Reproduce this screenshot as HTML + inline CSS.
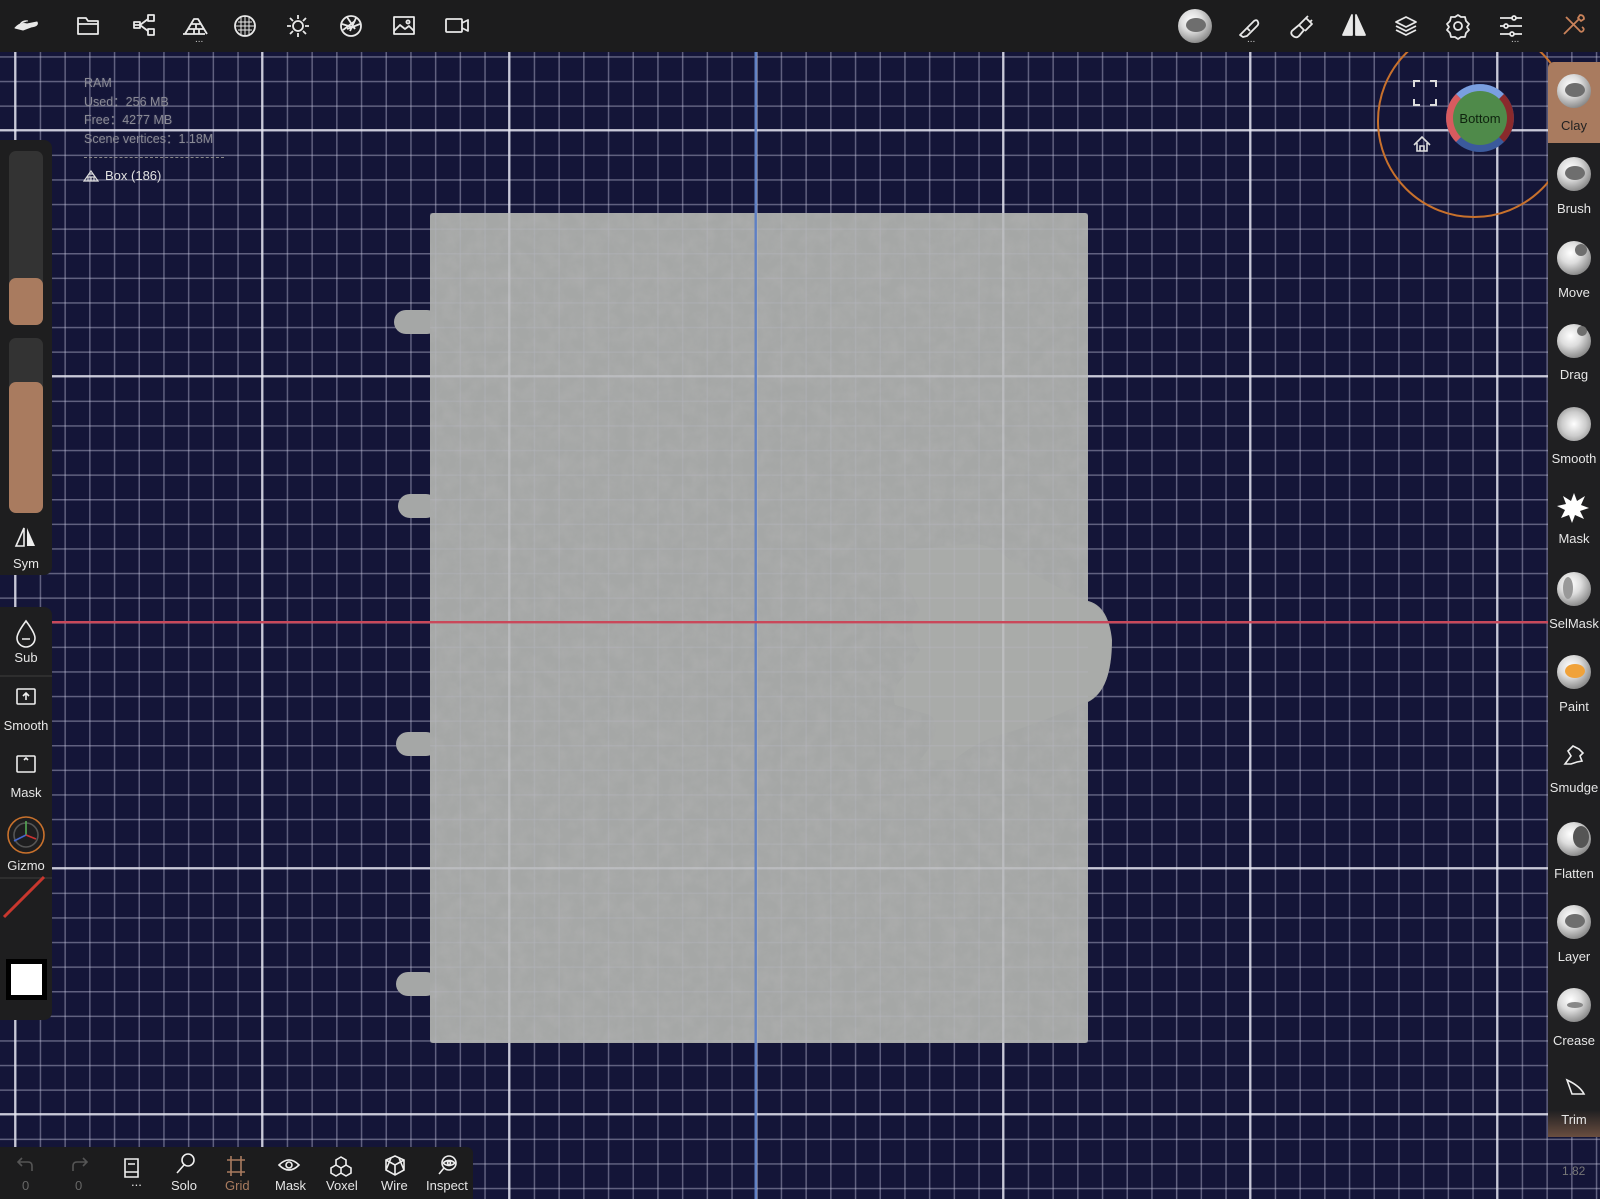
<!DOCTYPE html>
<html><head><meta charset="utf-8">
<style>
html,body{margin:0;padding:0;width:1600px;height:1199px;overflow:hidden;background:#141538;font-family:"Liberation Sans","DejaVu Sans",sans-serif;}
.abs{position:absolute}
.top{left:0;top:0;width:1600px;height:52px;background:#1c1c1d}
.lbl{position:absolute;color:#e6e6e6;font-size:13px;text-align:center;width:60px}
.rp{left:1548px;top:62px;width:52px;height:1075px;background:#1f1f21;border-radius:6px 0 0 6px}
.ball{position:absolute;width:34px;height:34px;border-radius:50%;background:radial-gradient(circle at 40% 35%,#fff 0,#ddd 35%,#8a8a8a 75%,#555 100%)}
.ball i{position:absolute;left:8px;top:9px;width:20px;height:14px;border-radius:50%;background:#6e6e6e}
</style></head><body>
<svg class="abs" style="left:0;top:0" width="1600" height="1199">
<defs>
<pattern id="mn" patternUnits="userSpaceOnUse" x="15" y="130" width="24.7" height="24.6">
<rect x="0" y="0" width="1.5" height="24.6" fill="rgba(200,200,225,0.42)"/>
<rect x="0" y="0" width="24.7" height="1.5" fill="rgba(200,200,225,0.42)"/>
</pattern>
<pattern id="mj" patternUnits="userSpaceOnUse" x="14" y="129" width="247" height="246">
<rect x="0" y="0" width="2.4" height="246" fill="rgba(235,235,245,0.75)"/>
<rect x="0" y="0" width="247" height="2.4" fill="rgba(235,235,245,0.75)"/>
</pattern>
<filter id="tx" x="0" y="0" width="100%" height="100%">
<feTurbulence type="fractalNoise" baseFrequency="0.07" numOctaves="4" seed="4"/>
<feColorMatrix type="matrix" values="0 0 0 0 0.45  0 0 0 0 0.45  0 0 0 0 0.45  0 0 0 -1.6 1.1"/>
</filter>
<clipPath id="mc"><rect x="430" y="213" width="658" height="830"/></clipPath>
</defs>
<rect x="0" y="52" width="1600" height="1147" fill="url(#mn)"/>
<rect x="0" y="52" width="1600" height="1147" fill="url(#mj)"/>
<!-- model -->
<g fill="#a5a7a6">
<rect x="430" y="213" width="658" height="830" rx="3"/>
<rect x="394" y="310" width="45" height="24" rx="12"/>
<rect x="398" y="494" width="40" height="24" rx="12"/>
<rect x="396" y="732" width="42" height="24" rx="12"/>
<rect x="396" y="972" width="42" height="24" rx="12"/>
<path d="M1080 600 Q1108 600 1112 640 Q1112 690 1088 702 L1080 702Z"/>
</g>
<rect x="430" y="213" width="658" height="830" filter="url(#tx)" opacity="0.45"/>
<path d="M905 550 L960 545 Q990 540 1010 560 Q1060 590 1095 605 Q1115 620 1110 660 Q1108 690 1090 700 Q1050 720 1000 735 Q970 745 955 760 L920 760 Q945 730 930 715 L895 705 Q890 690 905 675 L920 650 Q905 630 920 610 L905 580 Z" fill="#a9aba9"/>
<g opacity="0.35">
<rect x="0" y="52" width="1600" height="1147" fill="url(#mn)" clip-path="url(#mc)"/>
<rect x="0" y="52" width="1600" height="1147" fill="url(#mj)" clip-path="url(#mc)"/>
</g>
<rect x="754.5" y="52" width="2.4" height="1147" fill="#5e7fc4"/>
<rect x="0" y="621" width="1600" height="2.4" fill="#c9485a"/>
<!-- gizmo circle -->
<circle cx="1474" cy="121" r="96" fill="none" stroke="#c8712c" stroke-width="2"/>
<path d="M1414 87v-6h6 M1430 81h6v6 M1436 99v6h-6 M1420 105h-6v-6" stroke="#ddd" stroke-width="2" fill="none"/>
<path d="M1414 145l8-8 8 8 M1417 143v8h10v-8 M1420 151v-5h4v5" stroke="#ddd" stroke-width="1.6" fill="none"/>
<circle cx="1480" cy="118" r="34" fill="#3b5a9c"/>
<path d="M1456 94 A34 34 0 0 1 1504 94 L1494 104 L1466 104Z" fill="#7a9fe0"/>
<path d="M1456 94 L1466 104 L1466 132 L1456 142 A34 34 0 0 1 1456 94Z" fill="#d85b5f"/>
<path d="M1504 94 L1494 104 L1494 132 L1504 142 A34 34 0 0 0 1504 94Z" fill="#8a2a2c"/>
<rect x="1464" y="100" width="32" height="36" fill="#4f8a4a" rx="6"/>
<circle cx="1480" cy="118" r="27" fill="#4f8a4a"/>
<text x="1480" y="123" font-size="13" fill="#0e230e" text-anchor="middle" font-family="Liberation Sans,sans-serif">Bottom</text>
</svg>

<div class="abs" style="left:84px;top:74px;color:#8a8a95;font-size:12.5px;line-height:18.7px;text-shadow:0 0 2px #ccc3">RAM<br>Used：256 MB<br>Free：4277 MB<br>Scene vertices：1.18M</div>
<div class="abs" style="left:84px;top:157px;width:140px;border-top:1px dashed #888"></div>
<svg class="abs" style="left:83px;top:170px" width="16" height="12"><path d="M1 11h14L8 1Z M4 7h8 M6 4h4 M8 7v4 M5 7v4 M11 7v4" stroke="#ddd" fill="none" stroke-width="1.2"/></svg>
<div class="abs" style="left:105px;top:168px;color:#e0e0e0;font-size:13px">Box (186)</div>

<div class="abs top"></div>
<svg class="abs" style="left:0;top:0" width="1600" height="52" fill="none" stroke="#e8e8e8" stroke-width="1.8" stroke-linejoin="round">
<path d="M15 28 q5-6 12-4 l10-2 q2 4-6 5 l-8 3z M20 24 q3-4 8-3" fill="#e8e8e8" stroke-width="1"/>
<path d="M78 18h8l2 3h10v13H78z M78 24h20"/>
<path d="M134 25h6 M140 25l8-6 M140 25l8 6"/><rect x="134" y="22" width="6" height="6"/><rect x="148" y="15" width="6" height="6"/><rect x="148" y="29" width="6" height="6"/>
<path d="M183 34h22 M185 34l3-5h16l3 5 M188 29l3-5h10l3 5 M191 24l3-5h4l3 5 M194 29v5 M199 29v5 M196 24v5"/>
<circle cx="245" cy="26" r="10"/><path d="M238 22h14 M236 26h18 M238 30h14 M241 17v18 M245 16v20 M249 17v18" stroke-width="1"/>
<circle cx="298" cy="26" r="5"/><path d="M298 15v4 M298 33v4 M287 26h4 M305 26h4 M290 18l3 3 M303 31l3 3 M306 18l-3 3 M293 31l-3 3"/>
<circle cx="351" cy="26" r="10"/><path d="M347 17l8 12 M356 18l-6 13 M342 24l13 4 M343 30l12-9 M360 24l-13 5"/>
<rect x="394" y="17" width="20" height="17"/><path d="M394 31l6-6 5 4 4-3 5 5"/><circle cx="408" cy="22" r="1.6"/>
<rect x="446" y="19" width="16" height="13" rx="1"/><path d="M462 23l6-3v11l-6-3"/>
<path d="M1240 35l4-4 10-10 q3-2 4 1 q1 2-1 4 l-10 10 -4 1z M1247 28l3 3"/>
<path d="M1292 35q-2-3 1-5l6-5 5 5-5 6q-3 3-7-1z M1299 25l7-7 6 6-7 7 M1306 18l2-2 M1310 22l2-2"/>
<path d="M1352 15v20h-9z M1356 15v20h9z" fill="#e8e8e8"/>
<path d="M1406 17l10 5-10 5-10-5z M1396 26l10 5 10-5 M1396 30l10 5 10-5"/>
<circle cx="1458" cy="26" r="4"/><path d="M1458 15l3 2 4 0 1 4 3 3-2 3 2 3-3 3-1 4-4 0-3 2-3-2-4 0-1-4-3-3 2-3-2-3 3-3 1-4 4 0z"/>
<path d="M1500 18h22 M1500 26h22 M1500 34h22"/><circle cx="1514" cy="18" r="2" fill="#1c1c1d"/><circle cx="1506" cy="26" r="2" fill="#1c1c1d"/><circle cx="1512" cy="34" r="2" fill="#1c1c1d"/>
<path d="M1564 34l15-15 M1566 17l13 13 q2 3 4 1 q2-2-1-4 M1580 15 q4 0 4 4 l-3 2-3-3z" stroke="#c9825a"/>
</svg>
<div class="ball" style="left:1178px;top:9px"><i></i></div>
<div class="abs" style="left:195px;top:34px;color:#ccc;font-size:10px">...</div>
<div class="abs" style="left:1247px;top:34px;color:#ccc;font-size:10px">...</div>
<div class="abs" style="left:1511px;top:34px;color:#ccc;font-size:10px">...</div>

<div class="abs" style="left:0;top:140px;width:52px;height:435px;background:#1e1e1f;border-radius:0 8px 8px 0"></div>
<div class="abs" style="left:9px;top:151px;width:34px;height:174px;background:#333;border-radius:7px"></div>
<div class="abs" style="left:9px;top:278px;width:34px;height:47px;background:#a97b5f;border-radius:7px"></div>
<div class="abs" style="left:9px;top:338px;width:34px;height:175px;background:#333;border-radius:7px"></div>
<div class="abs" style="left:9px;top:382px;width:34px;height:131px;background:#a97b5f;border-radius:7px"></div>
<svg class="abs" style="left:14px;top:526px" width="24" height="22"><path d="M10 2v18H2z" fill="none" stroke="#eee" stroke-width="1.6"/><path d="M13 2v18h8z" fill="#eee"/></svg>
<div class="lbl" style="left:-4px;top:556px">Sym</div>
<div class="abs" style="left:0;top:607px;width:52px;height:413px;background:#1e1e1f;border-radius:0 8px 8px 0"></div>
<svg class="abs" style="left:0;top:607px" width="52" height="413" fill="none" stroke="#eee" stroke-width="1.6">
<path d="M26 14 q-9 12-9 17 a9 9 0 0 0 18 0 q0-5-9-17z M22 32h8"/>
<path d="M0 69h52 M0 271h52" stroke="#333"/>
<rect x="17" y="82" width="18" height="15" rx="1"/><path d="M26 93v-7 M23 89l3-3 3 3"/>
<rect x="17" y="149" width="18" height="16" rx="1"/><path d="M24 153l2-2 2 2"/>
<circle cx="26" cy="228" r="18" stroke="#c8712c"/><circle cx="26" cy="228" r="12" stroke="#555"/><path d="M26 228v-14" stroke="#5a5"/><path d="M26 228l-12 6" stroke="#46c"/><path d="M26 228l10 4" stroke="#c33"/>
<path d="M4 310l40-40" stroke="#c8372e" stroke-width="3"/>
</svg>
<div class="lbl" style="left:-4px;top:650px">Sub</div>
<div class="lbl" style="left:-4px;top:718px">Smooth</div>
<div class="lbl" style="left:-4px;top:785px">Mask</div>
<div class="lbl" style="left:-4px;top:858px">Gizmo</div>
<div class="abs" style="left:6px;top:959px;width:41px;height:41px;background:#000"></div>
<div class="abs" style="left:11px;top:964px;width:31px;height:31px;background:#fff"></div>

<div class="abs rp"></div>
<div class="abs" style="left:1548px;top:62px;width:52px;height:81px;background:#a97b5f;border-radius:6px 0 0 0"></div>
<div class="abs" style="left:1548px;top:1110px;width:52px;height:27px;background:linear-gradient(#1f1f21,#6a4e40)"></div>
<div class="ball" style="left:1557px;top:74px"><i></i></div>
<div class="ball" style="left:1557px;top:157px"><i></i></div>
<div class="ball" style="left:1557px;top:241px"><i style="left:18px;top:3px;width:12px;height:12px"></i></div>
<div class="ball" style="left:1557px;top:324px"><i style="left:20px;top:2px;width:10px;height:10px"></i></div>
<div class="ball" style="left:1557px;top:407px;background:radial-gradient(circle,#fff 0,#ccc 50%,#777 100%)"></div>
<svg class="abs" style="left:1557px;top:490px" width="34" height="34"><path d="M17 3l3 8 8-5-4 9 8 3-9 3 4 8-9-4-3 8-3-8-8 3 4-8-8-4 9-2-3-8 8 5z" fill="#fff"/></svg>
<div class="ball" style="left:1557px;top:572px"><i style="left:6px;top:5px;width:10px;height:22px;background:#999"></i></div>
<div class="ball" style="left:1557px;top:655px"><i style="background:#f0a23a"></i></div>
<svg class="abs" style="left:1557px;top:738px" width="34" height="34"><path d="M8 26l6-8-3-5 5-5 6 3 4 4-3 3 2 5-5 1-6 2z" fill="none" stroke="#eee" stroke-width="1.6"/></svg>
<div class="ball" style="left:1557px;top:822px"><i style="left:16px;top:4px;width:16px;height:22px;background:#555"></i></div>
<div class="ball" style="left:1557px;top:905px"><i></i></div>
<div class="ball" style="left:1557px;top:988px"><i style="left:10px;top:14px;width:16px;height:6px;background:#888"></i></div>
<svg class="abs" style="left:1557px;top:1072px" width="34" height="34"><path d="M10 8l5 14h12 q-4-8-17-14z" fill="none" stroke="#eee" stroke-width="1.6"/></svg>
<div class="lbl" style="left:1544px;top:118px;color:#222">Clay</div>
<div class="lbl" style="left:1544px;top:201px">Brush</div>
<div class="lbl" style="left:1544px;top:285px">Move</div>
<div class="lbl" style="left:1544px;top:367px">Drag</div>
<div class="lbl" style="left:1544px;top:451px">Smooth</div>
<div class="lbl" style="left:1544px;top:531px">Mask</div>
<div class="lbl" style="left:1544px;top:616px">SelMask</div>
<div class="lbl" style="left:1544px;top:699px">Paint</div>
<div class="lbl" style="left:1544px;top:780px">Smudge</div>
<div class="lbl" style="left:1544px;top:866px">Flatten</div>
<div class="lbl" style="left:1544px;top:949px">Layer</div>
<div class="lbl" style="left:1544px;top:1033px">Crease</div>
<div class="lbl" style="left:1544px;top:1112px">Trim</div>
<div class="abs" style="left:1562px;top:1164px;color:#777;font-size:12px">1.82</div>

<div class="abs" style="left:0;top:1147px;width:473px;height:52px;background:#1c1c1d;border-radius:0 6px 0 0"></div>
<svg class="abs" style="left:0;top:1147px" width="473" height="52" fill="none" stroke="#eee" stroke-width="1.6">
<path d="M32 24v-5q0-4-4-4h-10 M22 11l-4 4 4 4" stroke="#555"/>
<path d="M73 24v-5q0-4 4-4h10 M83 11l4 4-4 4" stroke="#555"/>
<path d="M125 12h13v18h-13z M128 17h7 M125 25h13" />
<circle cx="188" cy="13" r="6"/><path d="M184 18l-7 8"/>
<path d="M231 9v20 M241 9v20 M227 13h18 M227 25h18" stroke="#a97b5f"/>
<path d="M279 18q10-10 20 0q-10 10-20 0z"/><circle cx="289" cy="18" r="3"/>
<path d="M341 10l5 3v5l-5 3-5-3v-5z M336 18l-5 3v5l5 3 5-3 M346 18l5 3v5l-5 3-5-3v-5"/>
<path d="M395 9l9 4v10l-9 5-9-5V13z M386 13l9 5 9-5 M395 18v10 M391 11l-5 12 M399 11l5 12"/>
<circle cx="449" cy="16" r="7"/><path d="M443 16q6-5 12 0q-6 5-12 0 M444 21l-5 6"/><circle cx="449" cy="16" r="1.5"/>
</svg>
<div class="abs" style="left:0;top:1178px;width:473px;font-size:13px;color:#e6e6e6">
<span class="abs" style="left:22px;color:#666">0</span>
<span class="abs" style="left:75px;color:#666">0</span>
<span class="abs" style="left:131px;top:-4px">...</span>
<span class="abs" style="left:171px">Solo</span>
<span class="abs" style="left:225px;color:#a97b5f">Grid</span>
<span class="abs" style="left:275px">Mask</span>
<span class="abs" style="left:326px">Voxel</span>
<span class="abs" style="left:381px">Wire</span>
<span class="abs" style="left:426px">Inspect</span>
</div>
</body></html>
